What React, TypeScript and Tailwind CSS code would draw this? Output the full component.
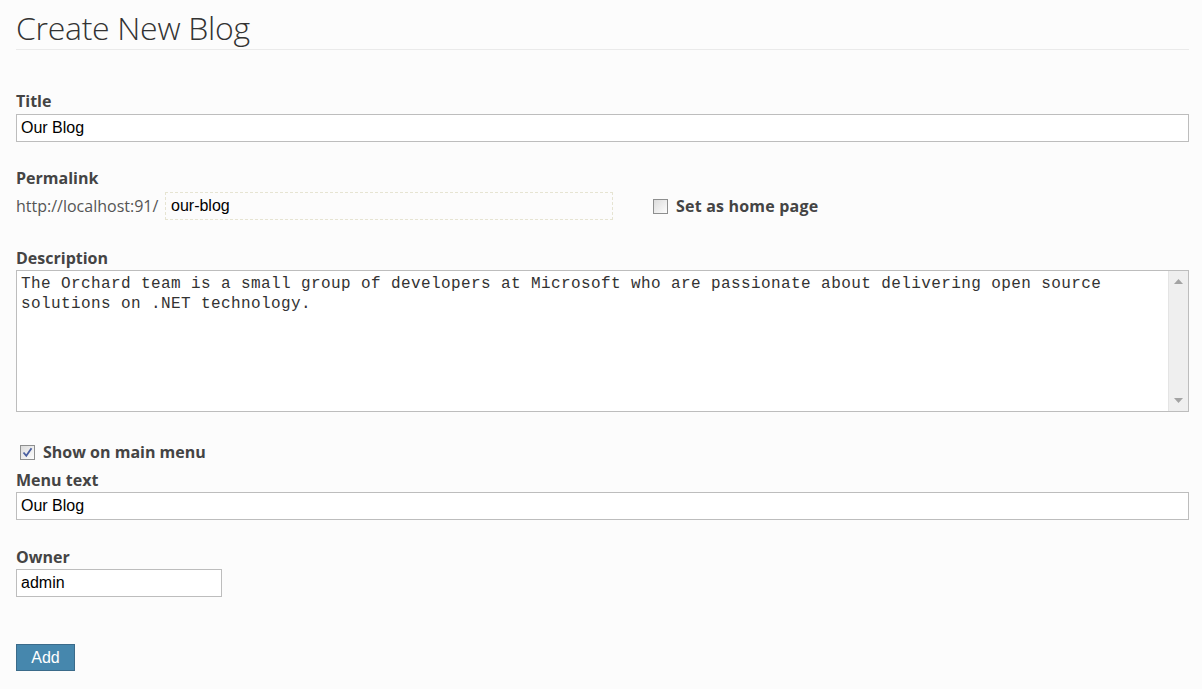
import type { ReactNode } from "react";

const sans = "font-['Segoe_UI','Open_Sans','Noto_Sans',sans-serif]";

function FieldLabel(props: { children: ReactNode; className?: string }) {
  return (
    <div
      className={`${sans} h-[22px] text-[16px] font-bold leading-[22px] text-[#444] ${props.className ?? ""}`}
    >
      {props.children}
    </div>
  );
}

function TextBox(props: { value: string; className?: string }) {
  return (
    <div
      className={`flex h-[28px] items-center border border-[#bdbdbd] bg-white px-[4px] font-['Liberation_Sans',Arial,sans-serif] text-[16px] text-black ${props.className ?? ""}`}
    >
      {props.value}
    </div>
  );
}

function Checkbox(props: { checked?: boolean }) {
  return (
    <span className="flex h-[15px] w-[15px] shrink-0 items-center justify-center border border-[#8e8f8f] bg-gradient-to-br from-[#dcdcdc] to-[#fdfdfd]">
      {props.checked ? (
        <svg width="11" height="11" viewBox="0 0 11 11">
          <path
            d="M1.5 5.5 L4.3 8.8 L9.5 1.2"
            fill="none"
            stroke="#4a5fa0"
            strokeWidth="1.8"
          />
        </svg>
      ) : null}
    </span>
  );
}

export default function App() {
  return (
    <div className="min-h-screen bg-[#fcfcfc] pl-[16px] pr-[13px]">
      <h1
        className={`${sans} h-[50px] border-b border-[#eaeaea] pt-[8px] text-[32px] font-light leading-[40px] tracking-[-0.3px] text-[#333]`}
      >
        Create New Blog
      </h1>

      <FieldLabel className="mt-[40px]">Title</FieldLabel>
      <TextBox value="Our Blog" className="mt-[2px]" />

      <FieldLabel className="mt-[25px]">Permalink</FieldLabel>
      <div className="mt-[3px] flex h-[28px] items-center">
        <span className={`${sans} w-[149px] text-[16px] text-[#555]`}>
          http://localhost:91/
        </span>
        <div className="flex h-[28px] w-[448px] items-center border border-dashed border-[#e6e4d2] px-[5px] font-['Liberation_Sans',Arial,sans-serif] text-[16px] text-black">
          our-blog
        </div>
        <div className="ml-[40px] flex items-center gap-[8px]">
          <Checkbox />
          <span
            className={`${sans} text-[16px] font-bold leading-[22px] tracking-[0.2px] text-[#444]`}
          >
            Set as home page
          </span>
        </div>
      </div>

      <FieldLabel className="mt-[27px]">Description</FieldLabel>
      <div className="mt-[1px] flex h-[142px] border border-[#bdbdbd] bg-white">
        <div className="flex-1 px-[4px] pt-[3px] font-['Liberation_Mono','Courier_New',monospace] text-[16px] leading-[20px] tracking-[0.4px] text-[#333]">
          The Orchard team is a small group of developers at Microsoft who are
          passionate about delivering open source solutions on .NET technology.
        </div>
        <div className="flex w-[20px] flex-col items-center justify-between border-l border-[#e4e4e4] bg-[#efefef] py-[8px]">
          <svg width="9" height="5" viewBox="0 0 9 5">
            <path d="M0 5 L4.5 0 L9 5 Z" fill="#a3a3a3" />
          </svg>
          <svg width="9" height="5" viewBox="0 0 9 5">
            <path d="M0 0 L4.5 5 L9 0 Z" fill="#a3a3a3" />
          </svg>
        </div>
      </div>

      <div className="mt-[29px] flex h-[22px] items-center gap-[8px] pl-[4px]">
        <Checkbox checked />
        <span
          className={`${sans} text-[16px] font-bold leading-[22px] text-[#444]`}
        >
          Show on main menu
        </span>
      </div>
      <FieldLabel className="mt-[6px]">Menu text</FieldLabel>
      <TextBox value="Our Blog" className="mt-[1px]" />

      <FieldLabel className="mt-[26px]">Owner</FieldLabel>
      <TextBox value="admin" className="mt-[1px] w-[206px]" />

      <button className="mt-[47px] flex h-[27px] w-[59px] items-center justify-center border border-[#3b6b8a] bg-[#4687ad] font-['Liberation_Sans',Arial,sans-serif] text-[16px] text-white">
        Add
      </button>
    </div>
  );
}
